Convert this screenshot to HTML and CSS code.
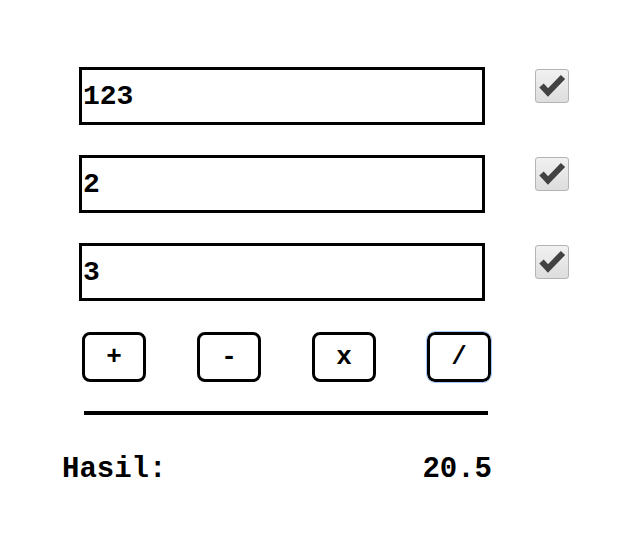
FILE: index.html
```html
<!DOCTYPE html>
<html>
<head>
<meta charset="utf-8">
<link rel="stylesheet" href="styles.css">
</head>
<body>
<div class="calc">
  <div class="row">
    <input class="num" type="text" value="123">
    <span class="check"><svg viewBox="0 0 34 34" width="34" height="34"><path d="M6.5 16.5 L13 23.5 L28 8" fill="none" stroke="#424242" stroke-width="6" stroke-linejoin="miter" stroke-linecap="butt"/></svg></span>
  </div>
  <div class="row">
    <input class="num" type="text" value="2">
    <span class="check"><svg viewBox="0 0 34 34" width="34" height="34"><path d="M6.5 16.5 L13 23.5 L28 8" fill="none" stroke="#424242" stroke-width="6" stroke-linejoin="miter" stroke-linecap="butt"/></svg></span>
  </div>
  <div class="row">
    <input class="num" type="text" value="3">
    <span class="check"><svg viewBox="0 0 34 34" width="34" height="34"><path d="M6.5 16.5 L13 23.5 L28 8" fill="none" stroke="#424242" stroke-width="6" stroke-linejoin="miter" stroke-linecap="butt"/></svg></span>
  </div>
  <div class="ops">
    <button class="op">+</button>
    <button class="op">-</button>
    <button class="op">x</button>
    <button class="op focus">/</button>
  </div>
  <hr class="rule">
  <div class="result">
    <span>Hasil:</span>
    <span>20.5</span>
  </div>
</div>
</body>
</html>
```
FILE: styles.css
```css
html, body {
  margin: 0;
  padding: 0;
  background: #fff;
}
body {
  font-family: "Liberation Mono", "Courier New", monospace;
  font-weight: bold;
  color: #000;
}
.calc {
  padding: 67px 0 0 79px;
  display: flex;
  flex-direction: column;
}
.row {
  display: flex;
  align-items: flex-start;
  margin-bottom: 30px;
}
.row:nth-child(3) {
  margin-bottom: 31px;
}
.num {
  box-sizing: border-box;
  width: 406px;
  height: 58px;
  border: 3px solid #000;
  padding: 1px 1px;
  margin: 0;
  font-family: "Liberation Mono", "Courier New", monospace;
  font-weight: bold;
  font-size: 28px;
  color: #000;
  background: #fff;
  outline: none;
}
.check {
  box-sizing: border-box;
  width: 34px;
  height: 34px;
  margin-left: 50px;
  margin-top: 2px;
  border: 1px solid #b3b3b3;
  border-radius: 3px;
  background: linear-gradient(#f1f1f1, #dddddd);
  display: flex;
  align-items: center;
  justify-content: center;
  overflow: hidden;
}
.check svg {
  display: block;
  flex: none;
}
.ops {
  display: flex;
  gap: 51px;
  padding-left: 3px;
}
.op {
  box-sizing: border-box;
  width: 64px;
  height: 50px;
  border: 3px solid #000;
  border-radius: 8px;
  background: #fff;
  font-family: "Liberation Mono", "Courier New", monospace;
  font-weight: bold;
  font-size: 26px;
  color: #000;
  padding: 0;
  margin: 0;
}
.op.focus {
  outline: 1px solid #a8cbff;
  outline-offset: 0;
}
.rule {
  box-sizing: border-box;
  width: 404px;
  height: 4px;
  margin: 29px 0 0 5px;
  border: none;
  background: #000;
}
.result {
  display: flex;
  justify-content: space-between;
  width: 430px;
  margin: 39px 0 0 -17px;
  font-size: 29px;
  line-height: 32px;
}
```
